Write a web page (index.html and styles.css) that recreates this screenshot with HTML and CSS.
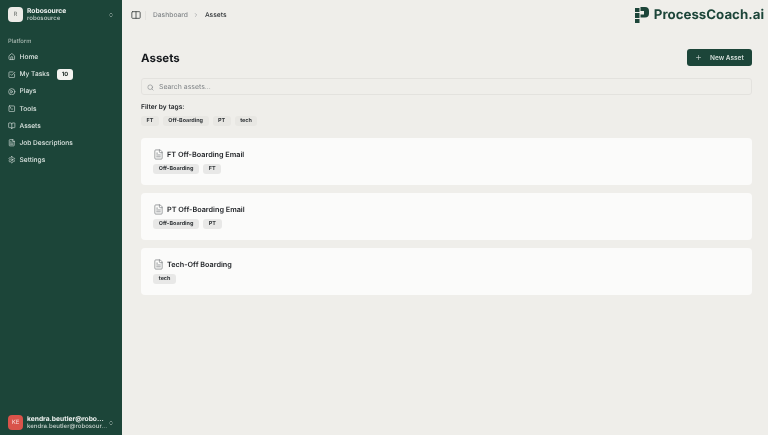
FILE: index.html
```html
<!DOCTYPE html>
<html lang="en">
<head>
<meta charset="utf-8">
<title>Assets</title>
<link rel="stylesheet" href="styles.css">
</head>
<body>
<div class="app">
  <aside class="sidebar">
    <div class="team">
      <div class="avatar light">R</div>
      <div class="who">
        <div class="name">Robosource</div>
        <div class="sub">robosource</div>
      </div>
      <svg class="updown" viewBox="0 0 24 24"><path d="m7 15 5 5 5-5M7 9l5-5 5 5"/></svg>
    </div>
    <div class="grouplabel">Platform</div>
    <nav class="nav">
      <a class="item"><svg class="ic" viewBox="0 0 24 24"><path d="M15 21v-8a1 1 0 0 0-1-1h-4a1 1 0 0 0-1 1v8"/><path d="M3 10a2 2 0 0 1 .7-1.5l7-6a2 2 0 0 1 2.6 0l7 6A2 2 0 0 1 21 10v9a2 2 0 0 1-2 2H5a2 2 0 0 1-2-2z"/></svg>Home</a>
      <a class="item"><svg class="ic" viewBox="0 0 24 24"><path d="M21 10.5V19a2 2 0 0 1-2 2H5a2 2 0 0 1-2-2V5a2 2 0 0 1 2-2h11"/><path d="m9 11 3 3L22 4"/></svg>My Tasks<span class="count">10</span></a>
      <a class="item"><svg class="ic" viewBox="0 0 24 24"><circle cx="12" cy="12" r="10"/><path d="m10 8 6 4-6 4z"/></svg>Plays</a>
      <a class="item"><svg class="ic" viewBox="0 0 24 24"><path d="m7 11 2-2-2-2M11 13h4"/><rect x="3" y="3" width="18" height="18" rx="2"/></svg>Tools</a>
      <a class="item"><svg class="ic" viewBox="0 0 24 24"><path d="M12 7v14"/><path d="M3 18a1 1 0 0 1-1-1V4a1 1 0 0 1 1-1h5a4 4 0 0 1 4 4 4 4 0 0 1 4-4h5a1 1 0 0 1 1 1v13a1 1 0 0 1-1 1h-6a3 3 0 0 0-3 3 3 3 0 0 0-3-3z"/></svg>Assets</a>
      <a class="item"><svg class="ic" viewBox="0 0 24 24"><path d="M15 2H6a2 2 0 0 0-2 2v16a2 2 0 0 0 2 2h12a2 2 0 0 0 2-2V7z"/><path d="M14 2v4a2 2 0 0 0 2 2h4M16 13H8M16 17H8M10 9H8"/></svg>Job Descriptions</a>
      <a class="item"><svg class="ic" viewBox="0 0 24 24"><path d="M12.2 2h-.4a2 2 0 0 0-2 2v.2a2 2 0 0 1-1 1.7l-.4.3a2 2 0 0 1-2 0l-.2-.1a2 2 0 0 0-2.7.7l-.2.4a2 2 0 0 0 .7 2.7l.2.1a2 2 0 0 1 1 1.7v.6a2 2 0 0 1-1 1.7l-.2.1a2 2 0 0 0-.7 2.7l.2.4a2 2 0 0 0 2.7.7l.2-.1a2 2 0 0 1 2 0l.4.3a2 2 0 0 1 1 1.7v.2a2 2 0 0 0 2 2h.4a2 2 0 0 0 2-2v-.2a2 2 0 0 1 1-1.7l.4-.3a2 2 0 0 1 2 0l.2.1a2 2 0 0 0 2.7-.7l.2-.4a2 2 0 0 0-.7-2.7l-.2-.1a2 2 0 0 1-1-1.7v-.6a2 2 0 0 1 1-1.7l.2-.1a2 2 0 0 0 .7-2.7l-.2-.4a2 2 0 0 0-2.7-.7l-.2.1a2 2 0 0 1-2 0l-.4-.3a2 2 0 0 1-1-1.7V4a2 2 0 0 0-2-2z"/><circle cx="12" cy="12" r="3"/></svg>Settings</a>
    </nav>
    <div class="user">
      <div class="avatar red">KE</div>
      <div class="who">
        <div class="name trunc">kendra.beutler@robo...</div>
        <div class="sub trunc">kendra.beutler@robosour...</div>
      </div>
      <svg class="updown" viewBox="0 0 24 24"><path d="m7 15 5 5 5-5M7 9l5-5 5 5"/></svg>
    </div>
  </aside>
  <div class="main">
    <header class="topbar">
      <div class="crumbs">
        <svg class="panel" viewBox="0 0 24 24"><rect x="2" y="4" width="20" height="16" rx="2"/><path d="M12 4v16"/></svg>
        <span class="divider"></span>
        <span class="crumb">Dashboard</span>
        <svg class="chev" viewBox="0 0 24 24"><path d="m9 18 6-6-6-6"/></svg>
        <span class="crumb current">Assets</span>
      </div>
      <div class="logo">
        <svg class="mark" viewBox="0 0 14 16"><path fill-rule="evenodd" d="M0 1h4.5v4H0zM0 6h4.5v5H0zM0 12h4.5v4H0zM5.5 0H10a4 4 0 0 1 4 4v2.500a4 4 0 0 1-4 4H5.500V7.500H9V4H5.500z"/></svg>
        <span class="logotext">ProcessCoach.ai</span>
      </div>
    </header>
    <main class="content">
      <div class="titlerow">
        <h1>Assets</h1>
        <button class="newbtn"><svg class="plus" viewBox="0 0 24 24"><path d="M5 12h14M12 5v14"/></svg>New Asset</button>
      </div>
      <div class="search">
        <svg class="lens" viewBox="0 0 24 24"><circle cx="11" cy="11" r="8"/><path d="m21 21-4.3-4.3"/></svg>
        <span>Search assets...</span>
      </div>
      <div class="filterlabel">Filter by tags:</div>
      <div class="tags filter">
        <span class="tag">FT</span><span class="tag">Off-Boarding</span><span class="tag">PT</span><span class="tag">tech</span>
      </div>
      <div class="cards">
        <article class="card">
          <div class="cardtitle"><svg class="doc" viewBox="0 0 24 24"><path d="M15 2H6a2 2 0 0 0-2 2v16a2 2 0 0 0 2 2h12a2 2 0 0 0 2-2V7z"/><path d="M14 2v4a2 2 0 0 0 2 2h4M16 13H8M16 17H8M10 9H8"/></svg>FT Off-Boarding Email</div>
          <div class="tags"><span class="tag dark">Off-Boarding</span><span class="tag dark">FT</span></div>
        </article>
        <article class="card">
          <div class="cardtitle"><svg class="doc" viewBox="0 0 24 24"><path d="M15 2H6a2 2 0 0 0-2 2v16a2 2 0 0 0 2 2h12a2 2 0 0 0 2-2V7z"/><path d="M14 2v4a2 2 0 0 0 2 2h4M16 13H8M16 17H8M10 9H8"/></svg>PT Off-Boarding Email</div>
          <div class="tags"><span class="tag dark">Off-Boarding</span><span class="tag dark">PT</span></div>
        </article>
        <article class="card">
          <div class="cardtitle"><svg class="doc" viewBox="0 0 24 24"><path d="M15 2H6a2 2 0 0 0-2 2v16a2 2 0 0 0 2 2h12a2 2 0 0 0 2-2V7z"/><path d="M14 2v4a2 2 0 0 0 2 2h4M16 13H8M16 17H8M10 9H8"/></svg>Tech-Off Boarding</div>
          <div class="tags"><span class="tag dark">tech</span></div>
        </article>
      </div>
    </main>
  </div>
</div>
</body>
</html>
```
FILE: styles.css
```css
* { box-sizing: border-box; }
html, body { margin: 0; height: 100%; }
body { font-family: Inter, "Liberation Sans", sans-serif; background: #efeeea; color: #16191d; overflow: hidden; text-rendering: geometricPrecision; }
svg { fill: none; stroke: currentColor; stroke-width: 2; stroke-linecap: round; stroke-linejoin: round; flex: none; }
.app { display: flex; height: 435px; will-change: transform; }
.sidebar { width: 122px; flex: none; background: #1c4539; color: #e6ece9; display: flex; flex-direction: column; padding: 6px 8px 4px 8px; }
.team { display: flex; align-items: center; gap: 4px; height: 17px; }
.avatar { width: 15px; height: 15px; border-radius: 4px; font-size: 6px; display: flex; align-items: center; justify-content: center; flex: none; }
.light { background: #ecebe7; color: #6a6f6c; }
.red { background: #d9534a; color: #f6ddda; }
.who { flex: 1; min-width: 0; line-height: 8px; margin-top: 1px; }
.name { font-size: 6.7px; font-weight: 700; color: #eef2f0; }
.sub { font-size: 6.1px; font-weight: 500; color: #c9d4cf; }
.trunc { white-space: nowrap; }
.updown { width: 6px; height: 6px; color: #cdd6d2; }
.grouplabel { font-size: 5.8px; font-weight: 500; color: #a9bab3; margin-top: 15px; height: 8px; line-height: 8px; }
.nav { display: flex; flex-direction: column; margin-top: 2.500px; }
.item { display: flex; align-items: center; height: 17.2px; font-size: 6.6px; font-weight: 500; color: #dbe4e0; gap: 4px; }
.ic { width: 7.500px; height: 7.500px; }
.count { background: #f3f3f0; color: #1c2a26; font-size: 5.8px; font-weight: 700; border-radius: 3px; width: 16px; height: 10.500px; display: flex; align-items: center; justify-content: center; margin-left: 3.500px; }
.user { margin-top: auto; display: flex; align-items: center; gap: 4px; height: 17px; }
.main { flex: 1; min-width: 0; display: flex; flex-direction: column; }
.topbar { height: 30px; display: flex; align-items: center; justify-content: space-between; padding: 0 4px 0 8.500px; }
.crumbs { display: flex; align-items: center; }
.panel { width: 10px; height: 10px; color: #3b4140; }
.divider { width: 1px; height: 9px; background: #e4e3df; margin: 0 7px 0 4.500px; }
.crumb { font-size: 6.7px; font-weight: 500; color: #83878a; }
.crumb.current { color: #33373a; }
.chev { width: 6px; height: 6px; color: #83878a; margin: 0 5.500px; }
.logo { display: flex; align-items: center; gap: 5px; color: #1c4539; margin-top: -1px; }
.mark { width: 14px; height: 16px; fill: currentColor; stroke: none; }
.logotext { font-size: 13.3px; font-weight: 700; }
.content { padding: 19px 16px 0 19px; }
.titlerow { display: flex; justify-content: space-between; align-items: center; height: 17px; }
h1 { margin: 0; font-size: 11.5px; font-weight: 700; color: #15181c; }
.newbtn { display: flex; align-items: center; width: 65px; height: 17px; border: 0; border-radius: 3px; background: #1c4539; color: #d5dfdb; font: 600 6.5px Inter, "Liberation Sans", sans-serif; padding: 0 0 0 8px; gap: 8px; }
.plus { width: 7px; height: 7px; }
.search { display: flex; align-items: center; height: 17px; margin-top: 12px; border: 1px solid #e3e2de; border-radius: 3px; padding-left: 5px; gap: 5px; font-size: 6.9px; color: #7f8386; }
.lens { width: 7px; height: 7px; margin-top: 2px; }
.filterlabel { font-size: 6.6px; font-weight: 600; margin-top: 8px; line-height: 9px; color: #25282b; }
.tags { display: flex; gap: 4px; }
.filter { margin-top: 4px; }
.tag { font-size: 5.45px; font-weight: 700; height: 10px; line-height: 10px; padding: 0 5.500px; border-radius: 3px; background: #e8e7e3; color: #33373a; }
.tag.dark { background: #e8e8e7; padding: 0 5.700px; }
.cards { display: flex; flex-direction: column; gap: 8px; margin-top: 12px; }
.card { background: #fbfbfa; border-radius: 4px; height: 47px; padding: 11.500px 12px 0; }
.cardtitle { display: flex; align-items: center; gap: 3px; font-size: 7.25px; font-weight: 600; color: #1c1f23; height: 10px; }
.doc { width: 11px; height: 11px; color: #7d8184; stroke-width: 1.600; }
.card .tags { margin-top: 4.500px; }
```
